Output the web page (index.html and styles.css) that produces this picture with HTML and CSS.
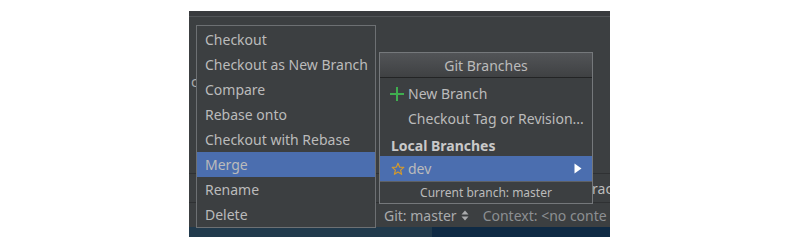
FILE: index.html
```html
<!DOCTYPE html>
<html lang="en">
<head>
    <meta charset="UTF-8">
    <title>Git Branches</title>
    <link rel="stylesheet" href="styles.css">
</head>
<body>
    <div class="ide">
        <div class="ide-top"></div>
        <div class="ide-editor"><span class="stub">c</span></div>
        <div class="ide-tools"><span class="tool-tab">Trac</span></div>
        <div class="ide-status">
            <span class="vcs-widget">Git: master
                <svg width="8" height="11" viewBox="0 0 8 11"><path d="M4 0.5 L7.5 4.5 H0.5 Z M4 10.5 L7.5 6.5 H0.5 Z" fill="#a9abad"/></svg>
            </span>
            <span class="context">Context: &lt;no conte</span>
        </div>
        <div class="ide-taskbar"><div class="task-left"></div></div>

        <!-- branch actions submenu -->
        <ul class="action-menu">
            <li>Checkout</li>
            <li>Checkout as New Branch</li>
            <li>Compare</li>
            <li>Rebase onto</li>
            <li>Checkout with Rebase</li>
            <li class="selected">Merge</li>
            <li>Rename</li>
            <li>Delete</li>
        </ul>

        <!-- branches popup -->
        <div class="branches-popup">
            <div class="popup-title">Git Branches</div>
            <div class="popup-body">
                <div class="popup-row">
                    <span class="row-icon">
                        <svg width="16" height="16" viewBox="0 0 16 16"><path d="M8 1 V15 M1 8 H15" stroke="#3fae4f" stroke-width="2"/></svg>
                    </span>
                    New Branch
                </div>
                <div class="popup-row">
                    <span class="row-icon"></span>
                    Checkout Tag or Revision...
                </div>
                <div class="popup-row group-title">Local Branches</div>
                <div class="popup-row branch selected">
                    <span class="row-icon">
                        <svg width="14" height="14" viewBox="0 0 14 14"><path d="M7 1.2 L8.6 5.1 L12.8 5.4 L9.6 8.1 L10.6 12.3 L7 10 L3.4 12.3 L4.4 8.1 L1.2 5.4 L5.4 5.1 Z" fill="none" stroke="#d49a2c" stroke-width="1.2" stroke-linejoin="round"/></svg>
                    </span>
                    dev
                    <svg class="submenu-arrow" width="8" height="11" viewBox="0 0 8 11"><path d="M0.5 0.5 L7.5 5.5 L0.5 10.5 Z" fill="#ffffff"/></svg>
                </div>
            </div>
            <div class="popup-footer">Current branch: master</div>
        </div>
    </div>
</body>
</html>
```

FILE: styles.css
```css
* {
    margin: 0;
    padding: 0;
    box-sizing: border-box;
}

body {
    background: #ffffff;
    font-family: "Noto Sans", "Open Sans", sans-serif;
    font-size: 14px;
    color: #bbbbbb;
}

.ide {
    position: relative;
    width: 421px;
    height: 226px;
    margin: 11px 0 0 189px;
    background: #3c3f41;
    overflow: hidden;
    display: flex;
    flex-direction: column;
}

.ide-top {
    height: 6px;
    background: #393b3e;
    border-bottom: 1px solid #515457;
}

.ide-editor {
    height: 157px;
    border-bottom: 1px solid #2f3133;
    padding: 55px 0 0 2px;
}

.stub {
    color: #a9abad;
}

.ide-tools {
    height: 29px;
    border-bottom: 1px solid #2f3133;
    display: flex;
    align-items: center;
    padding-left: 396px;
    white-space: nowrap;
}

.tool-tab {
    color: #bbbbbb;
}

.ide-status {
    height: 24px;
    display: flex;
    align-items: center;
    padding-left: 195px;
    white-space: nowrap;
    color: #a9abad;
}

.vcs-widget {
    display: inline-flex;
    align-items: center;
    gap: 4px;
}

.context {
    margin-left: 14px;
    color: #8c8f92;
}

.ide-taskbar {
    flex: 1;
    background: #0f2a44;
    display: flex;
}

.task-left {
    width: 243px;
    background: #213a4c;
}

/* submenu with branch actions */
.action-menu {
    position: absolute;
    left: 7px;
    top: 14px;
    width: 180px;
    height: 203px;
    list-style: none;
    background: #3c3f41;
    border: 1px solid #6d7073;
    padding-top: 1px;
}

.action-menu li {
    height: 25px;
    line-height: 26px;
    padding-left: 8px;
    white-space: nowrap;
}

.action-menu li.selected {
    background: #4b6eaf;
}

/* git branches popup */
.branches-popup {
    position: absolute;
    left: 190px;
    top: 41px;
    width: 214px;
    background: #3c3f41;
    border: 1px solid #75787b;
}

.popup-title {
    height: 25px;
    line-height: 25px;
    text-align: center;
    background: linear-gradient(#525457, #3f4143);
    border-bottom: 1px solid #232425;
}

.popup-body {
    padding-top: 3px;
    border-bottom: 1px solid #5e6164;
}

.popup-row {
    height: 25px;
    display: flex;
    align-items: center;
    padding-left: 9px;
    white-space: nowrap;
}

.row-icon {
    width: 19px;
    height: 16px;
    display: flex;
    align-items: center;
}

.group-title {
    padding-left: 11px;
    font-weight: 700;
    color: #c9c9c9;
    padding-top: 3px;
}

.popup-row.branch {
    padding-left: 11px;
}

.popup-row.branch .row-icon {
    width: 17px;
}

.popup-row.selected {
    background: #4b6eaf;
}

.submenu-arrow {
    margin-left: auto;
    margin-right: 10px;
}

.popup-footer {
    height: 21px;
    line-height: 21px;
    text-align: center;
    font-size: 12px;
    color: #bbbbbb;
}
```
